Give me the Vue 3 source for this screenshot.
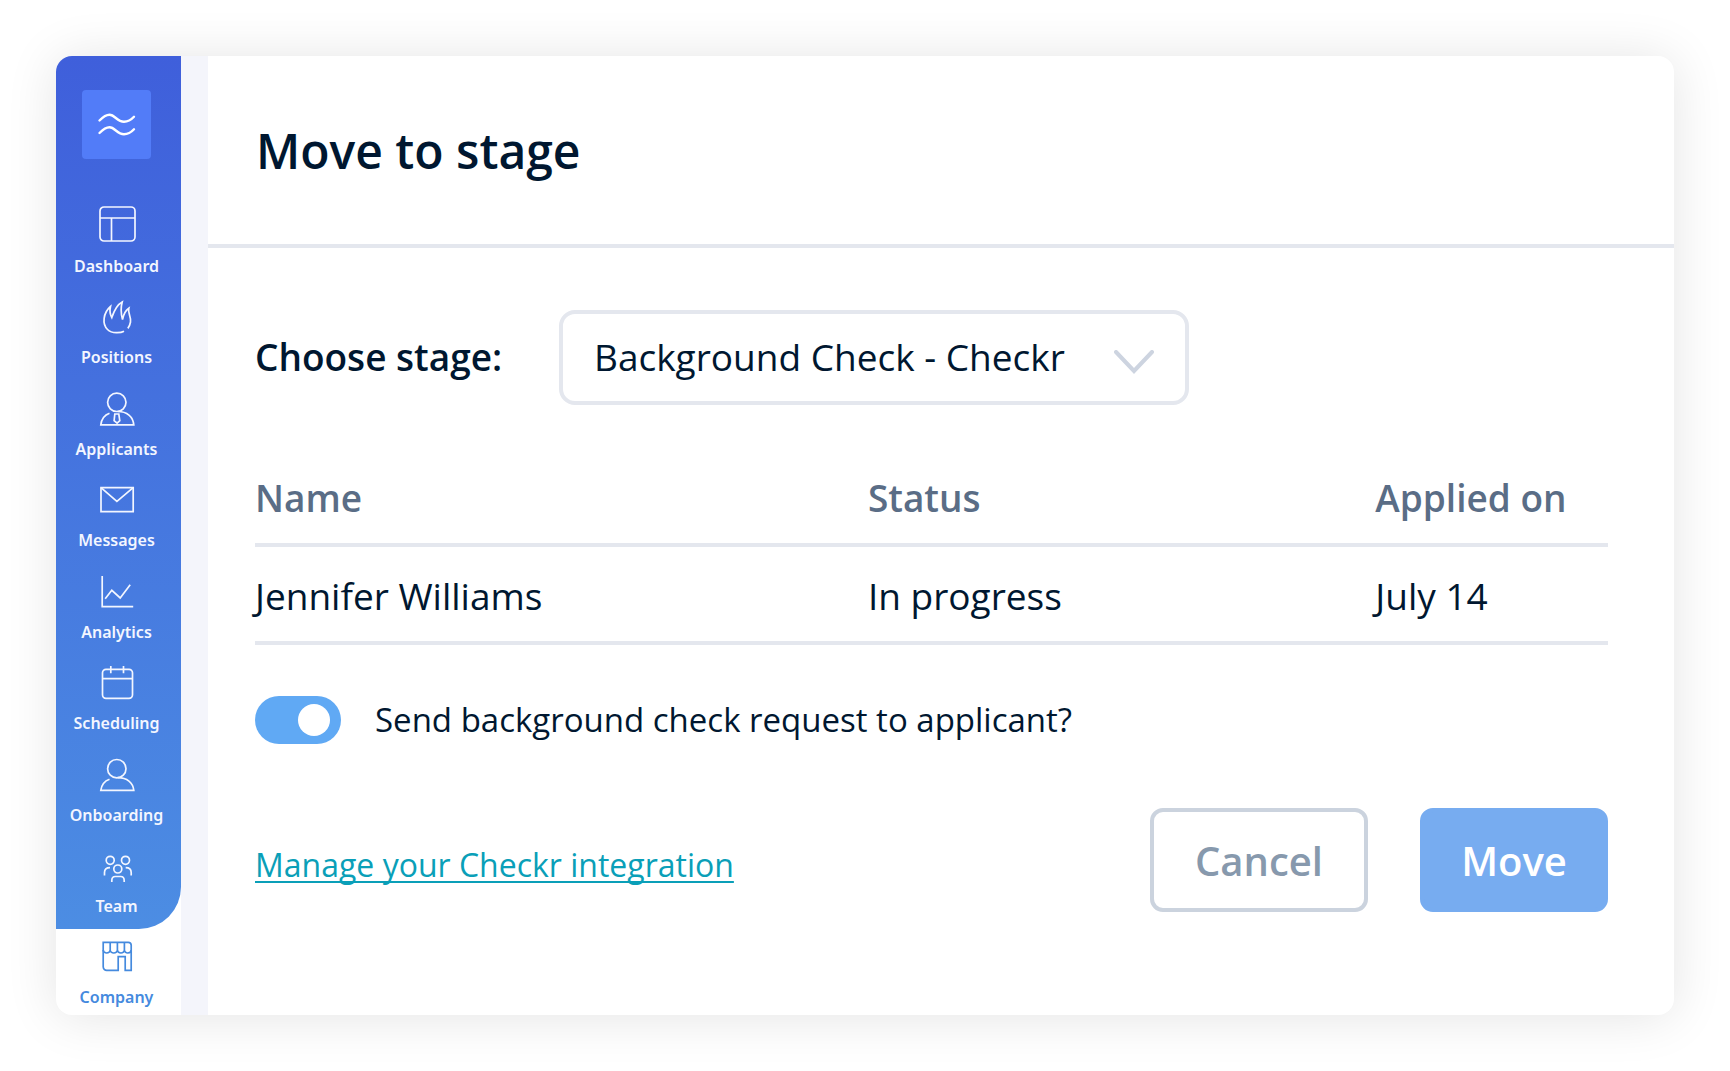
<script setup>
import { ref } from 'vue'

const stage = ref('checkr')
const sendRequest = ref(true)

const navItems = [
  {
    label: 'Dashboard',
    paths: ['M7 1h27a4 4 0 0 1 4 4v26a4 4 0 0 1-4 4H7a4 4 0 0 1-4-4V5a4 4 0 0 1 4-4z', 'M3 12h35M14.5 12v23'],
  },
  {
    label: 'Positions',
    paths: ['M27 34.2C24 36 15 37 10.500 32.500C5 27 6 16 13.500 9.500C12.500 14 13 17.500 14.800 20.600C17 14 19.500 8 25.200 5C23.500 11 24 17 25.500 22.600C26.500 17.500 28.500 13.500 31.800 11.300C30.500 16 34.500 20 33.500 25C33 28 32 30 30.800 31.300'],
  },
  {
    label: 'Applicants',
    paths: [
      'M29 13.300a9.200 9.200 0 1 1-18.400 0a9.200 9.200 0 1 1 18.400 0z',
      'M12.500 24.200C7.500 26 4.500 30 3.800 35.800H36.800C36 27.500 30 22.500 20.800 22.500',
      'M17.800 25h4l1 6.600l-2.700 2.600l-3-2.600z',
    ],
  },
  { label: 'Messages', paths: ['M4 7.700h32.200v24H4z', 'M4 7.700l15.900 13.600L36.200 7.700'] },
  { label: 'Analytics', paths: ['M5.200 4v30.700h31', 'M8.200 26.700l6.600-8.400l8.400 7.700l10-13.300'] },
  {
    label: 'Scheduling',
    paths: ['M9 6.300h23a3.500 3.500 0 0 1 3.500 3.500v22a3.500 3.500 0 0 1-3.500 3.500H9a3.500 3.500 0 0 1-3.500-3.500v-22a3.500 3.500 0 0 1 3.500-3.500z', 'M5.500 15.600h30M13.800 3v7.300M26.500 3v7.300'],
  },
  {
    label: 'Onboarding',
    paths: [
      'M29 13.700a9.200 9.200 0 1 1-18.400 0a9.200 9.200 0 1 1 18.400 0z',
      'M12.500 24.200C7.500 26 4.500 30 3.800 35.400H36.800C36 27.500 30 22.700 20.800 22.700',
    ],
  },
  {
    label: 'Team',
    paths: [
      'M17.200 14.300a4 4 0 1 1-8 0a4 4 0 1 1 8 0zM32.500 14.300a4 4 0 1 1-8 0a4 4 0 1 1 8 0zM24.800 23a4 4 0 1 1-8 0a4 4 0 1 1 8 0z',
      'M7.500 29.500v-3c0-3 2-4.800 5.500-4.800M34.200 29.500v-3c0-3-2-4.800-5.500-4.800M14.800 36v-1.500c0-3 1.500-4 3.500-4h5.400c2 0 3.500 1 3.500 4V36',
    ],
  },
]

const applicants = [{ name: 'Jennifer Williams', status: 'In progress', applied: 'July 14' }]
</script>

<template>
  <div class="page">
    <div class="card">
      <aside class="sidebar">
        <nav class="nav" aria-label="Main">
          <div class="logo">
            <svg viewBox="0 0 69 69" aria-hidden="true">
              <path d="M17.500 30.500C21 27 24 24.800 27.500 24.800C33 24.800 35 31.800 42 31.800C46 31.800 49 30 52 26.800" />
              <path d="M17.500 43C21 39.500 24 37.300 27.500 37.300C33 37.300 35 44.300 42 44.300C46 44.300 49 42.500 52 39.300" />
            </svg>
          </div>
          <a v-for="item in navItems" :key="item.label" class="nav-item" href="#">
            <svg class="icon" viewBox="0 0 40 40" aria-hidden="true">
              <path v-for="d in item.paths" :key="d" :d="d" />
            </svg>
            <span>{{ item.label }}</span>
          </a>
        </nav>
        <a class="nav-item company" href="#" aria-current="page">
          <svg class="icon" viewBox="0 0 40 40" aria-hidden="true">
            <path d="M21.200 33.300H9.700a3.500 3.500 0 0 1-3.500-3.500V5.300h25a3 3 0 0 1 3 3v25h-6V19.700h-7z" />
            <path d="M6.200 13a3.500 3 0 0 0 7 0a3.600 3 0 0 0 7.200 0a3.500 3 0 0 0 7 0a3.400 3 0 0 0 6.800 0M13.200 5.300V13M20.400 5.300V13M27.400 5.300V13" />
          </svg>
          <span>Company</span>
        </a>
      </aside>

      <main class="main">
        <header class="header">
          <h1>Move to stage</h1>
        </header>

        <form class="body" @submit.prevent>
          <div class="stage-row">
            <label for="stage">Choose stage:</label>
            <div class="select">
              <select id="stage" v-model="stage">
                <option value="checkr">Background Check - Checkr</option>
              </select>
              <svg class="chevron" viewBox="0 0 40 24" aria-hidden="true">
                <path d="M2 2L20 21L38 2" />
              </svg>
            </div>
          </div>

          <table>
            <thead>
              <tr>
                <th class="col-name" scope="col">Name</th>
                <th class="col-status" scope="col">Status</th>
                <th scope="col">Applied on</th>
              </tr>
            </thead>
            <tbody>
              <tr v-for="row in applicants" :key="row.name">
                <td>{{ row.name }}</td>
                <td>{{ row.status }}</td>
                <td>{{ row.applied }}</td>
              </tr>
            </tbody>
          </table>

          <div class="toggle-row">
            <input id="send" v-model="sendRequest" type="checkbox" role="switch" />
            <label for="send">Send background check request to applicant?</label>
          </div>

          <footer class="footer">
            <a class="manage" href="#">Manage your Checkr integration</a>
            <button class="cancel" type="button">Cancel</button>
            <button class="move" type="submit">Move</button>
          </footer>
        </form>
      </main>
    </div>
  </div>
</template>

<style>
body {
  background: #fff;
}
</style>

<style scoped>
* {
  box-sizing: border-box;
}

.page {
  padding: 56px;
  color: #001730;
  font-family: "Open Sans", "Liberation Sans", sans-serif;
}

.card {
  display: flex;
  border-radius: 16px;
  background: #fff;
  box-shadow: 0 2px 52px rgba(0, 0, 0, 0.11);
  overflow: hidden;
}

.sidebar {
  display: flex;
  flex-direction: column;
  flex: none;
  width: 125px;
  font-family: "Noto Sans", "Liberation Sans", sans-serif;
}

.nav {
  display: flex;
  flex: 1;
  flex-direction: column;
  padding: 34px 4px 5px 0;
  border-bottom-right-radius: 42px;
  background: linear-gradient(#3f5fdb, #4c8de3);
}

.logo {
  align-self: center;
  width: 69px;
  height: 69px;
  margin-bottom: 33px;
  border-radius: 4px;
  background: #527cf8;
}

.logo svg {
  display: block;
  fill: none;
  stroke: #fff;
  stroke-width: 2.4;
  stroke-linecap: round;
}

.nav-item {
  display: flex;
  flex: 1 1 78px;
  flex-direction: column;
  align-items: center;
  justify-content: flex-end;
  gap: 8px;
  padding-bottom: 6px;
  color: #f3f6ff;
  font-size: 16px;
  font-weight: 600;
  line-height: 24px;
  text-decoration: none;
}

.icon {
  width: 40px;
  height: 40px;
  fill: none;
  stroke: currentColor;
  stroke-width: 1.7;
}

.company {
  flex: 0 0 86px;
  padding-right: 4px;
  color: #458ade;
}

.main {
  flex: 1;
  min-width: 0;
  border-left: 27px solid #f4f5fb;
}

.header {
  display: flex;
  align-items: center;
  height: 192px;
  padding: 2px 48px 0;
  border-bottom: 4px solid #e4e7ee;
}

h1 {
  margin: 0;
  font-size: 48px;
  font-weight: 600;
  line-height: 64px;
}

.body {
  padding: 62px 66px 103px 47px;
}

.stage-row {
  display: flex;
  align-items: center;
  font-size: 37px;
}

.stage-row label {
  flex: none;
  width: 304px;
  padding-bottom: 2px;
  font-weight: 600;
}

.select {
  display: grid;
  flex: 0 1 630px;
  align-items: center;
}

.select > * {
  grid-area: 1 / 1;
}

select {
  width: 100%;
  height: 95px;
  padding: 0 88px 2px 31px;
  border: 4px solid #e4e7ee;
  border-radius: 16px;
  background: #fff;
  color: inherit;
  font: inherit;
  appearance: none;
}

.chevron {
  justify-self: end;
  width: 40px;
  height: 24px;
  margin: 8px 35px 0 0;
  fill: none;
  stroke: #cdd4e0;
  stroke-width: 4;
  stroke-linecap: round;
  pointer-events: none;
}

table {
  width: 100%;
  margin-top: 48px;
  border-spacing: 0;
  table-layout: fixed;
  font-size: 37px;
  line-height: 48px;
}

th,
td {
  padding: 0;
  border-bottom: 4px solid #e4e7ee;
  text-align: left;
}

th {
  height: 94px;
  color: #5a6d86;
  font-weight: 600;
}

td {
  height: 98px;
  padding-top: 4px;
}

.col-name {
  width: 45.3%;
}

.col-status {
  width: 37.5%;
}

.toggle-row {
  display: flex;
  align-items: center;
  gap: 34px;
  margin-top: 51px;
  font-size: 33px;
  line-height: 48px;
}

input {
  display: flex;
  align-items: center;
  justify-content: flex-start;
  width: 86px;
  height: 48px;
  margin: 0;
  padding: 0 11px;
  border-radius: 24px;
  background: #cbd3de;
  appearance: none;
}

input:checked {
  justify-content: flex-end;
  background: #60a9f4;
}

input::before {
  width: 32px;
  height: 32px;
  border-radius: 50%;
  background: #fff;
  content: "";
}

.footer {
  display: flex;
  align-items: center;
  margin-top: 64px;
}

.manage {
  margin-right: auto;
  padding-top: 8px;
  color: #0a9fb8;
  font-size: 32px;
  text-decoration-thickness: 2px;
  text-decoration-skip-ink: none;
  text-underline-offset: 4px;
}

button {
  height: 104px;
  padding: 0;
  border: 4px solid #cbd3de;
  border-radius: 13px;
  background: #fff;
  font: inherit;
  font-size: 40px;
  font-weight: 600;
}

.cancel {
  width: 218px;
  margin-right: 52px;
  color: #8799ad;
}

.move {
  width: 188px;
  border-color: #77acf0;
  background: #77acf0;
  color: #fff;
}
</style>
